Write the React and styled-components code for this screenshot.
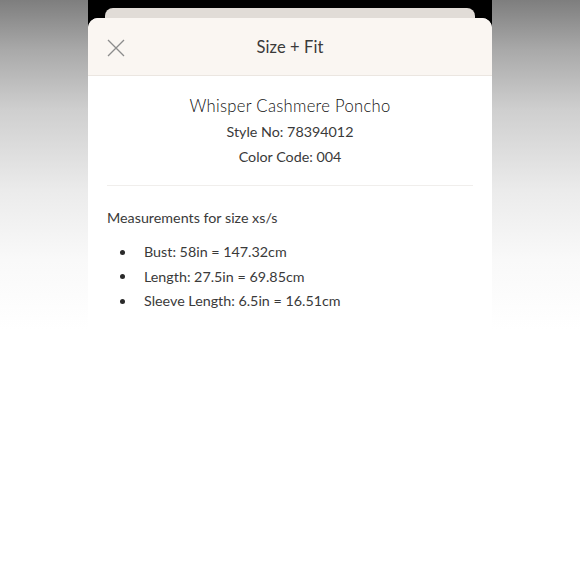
import React from "react";
import styled, { createGlobalStyle } from "styled-components";

const Global = createGlobalStyle`
  html, body { margin: 0; padding: 0; background: #fff; }
  body { font-family: Lato, "Open Sans", sans-serif; color: #333; }
`;

const Page = styled.div`
  display: grid;
  grid-template-columns: 88px 404px 88px;
  height: 580px;
  overflow: hidden;
`;

const Side = styled.div`
  background: linear-gradient(
    180deg,
    #7e7e7e 0px,
    #a9a9a9 50px,
    #cfcfcf 110px,
    #ebebeb 190px,
    #f9f9f9 260px,
    #ffffff 330px
  );
`;

const Center = styled.div`
  display: flex;
  flex-direction: column;
  background: linear-gradient(180deg, #000 0, #000 40px, #fff 40px);
`;

const BackSheet = styled.div`
  height: 10px;
  margin: 8px 17px 0 17px;
  background: #e1dcd7;
  border-radius: 8px 8px 0 0;
`;

const Modal = styled.div`
  flex: 1;
  display: flex;
  flex-direction: column;
  background: #fff;
  border-radius: 10px 10px 0 0;
  overflow: hidden;
`;

const Header = styled.div`
  position: relative;
  height: 57px;
  display: flex;
  align-items: center;
  justify-content: center;
  background: #faf6f2;
  border-bottom: 1px solid #ebe6e1;
`;

const CloseButton = styled.button`
  position: absolute;
  left: 19px;
  top: 21px;
  width: 18px;
  height: 18px;
  padding: 0;
  border: 0;
  background: none;
  display: flex;
`;

const HeaderTitle = styled.div`
  font-size: 16.5px;
  color: #3a3a3a;
  letter-spacing: 0.1px;
`;

const Body = styled.div`
  padding: 19px 19px 0 19px;
  display: flex;
  flex-direction: column;
`;

const ProductBlock = styled.div`
  display: flex;
  flex-direction: column;
  align-items: center;
  padding-bottom: 16px;
  border-bottom: 1px solid #f0eeec;
`;

const ProductName = styled.div`
  font-family: Lato, sans-serif;
  font-weight: 300;
  font-size: 16.6px;
  line-height: 22px;
  color: #111;
  letter-spacing: 0.3px;
`;

const InfoLine = styled.div`
  font-size: 14.3px;
  line-height: 25px;
  color: #3a3a3a;
  margin-top: ${(p) => p.$mt || 0}px;
`;

const SectionTitle = styled.div`
  font-size: 14.3px;
  line-height: 20px;
  color: #3a3a3a;
  margin-top: 22px;
`;

const List = styled.ul`
  margin: 12px 0 0 0;
  padding: 0;
  list-style: none;
  display: flex;
  flex-direction: column;
`;

const Item = styled.li`
  display: flex;
  align-items: center;
  font-size: 14.3px;
  line-height: 24.6px;
  color: #3a3a3a;
`;

const Bullet = styled.span`
  width: 5px;
  height: 5px;
  border-radius: 50%;
  background: #2a2a2a;
  margin-left: 13px;
  margin-right: 19px;
  flex: none;
`;

const items = [
  "Bust: 58in = 147.32cm",
  "Length: 27.5in = 69.85cm",
  "Sleeve Length: 6.5in = 16.51cm",
];

export default function App() {
  return (
    <>
      <Global />
      <Page>
        <Side />
        <Center>
          <BackSheet />
          <Modal>
            <Header>
              <CloseButton aria-label="Close">
                <svg width="18" height="18" viewBox="0 0 18 18">
                  <path
                    d="M1 1 L17 17 M17 1 L1 17"
                    stroke="#8c8c8c"
                    strokeWidth="1.3"
                    fill="none"
                  />
                </svg>
              </CloseButton>
              <HeaderTitle>Size + Fit</HeaderTitle>
            </Header>
            <Body>
              <ProductBlock>
                <ProductName>Whisper Cashmere Poncho</ProductName>
                <InfoLine $mt={2}>Style No: 78394012</InfoLine>
                <InfoLine>Color Code: 004</InfoLine>
              </ProductBlock>
              <SectionTitle>Measurements for size xs/s</SectionTitle>
              <List>
                {items.map((t) => (
                  <Item key={t}>
                    <Bullet />
                    {t}
                  </Item>
                ))}
              </List>
            </Body>
          </Modal>
        </Center>
        <Side />
      </Page>
    </>
  );
}
